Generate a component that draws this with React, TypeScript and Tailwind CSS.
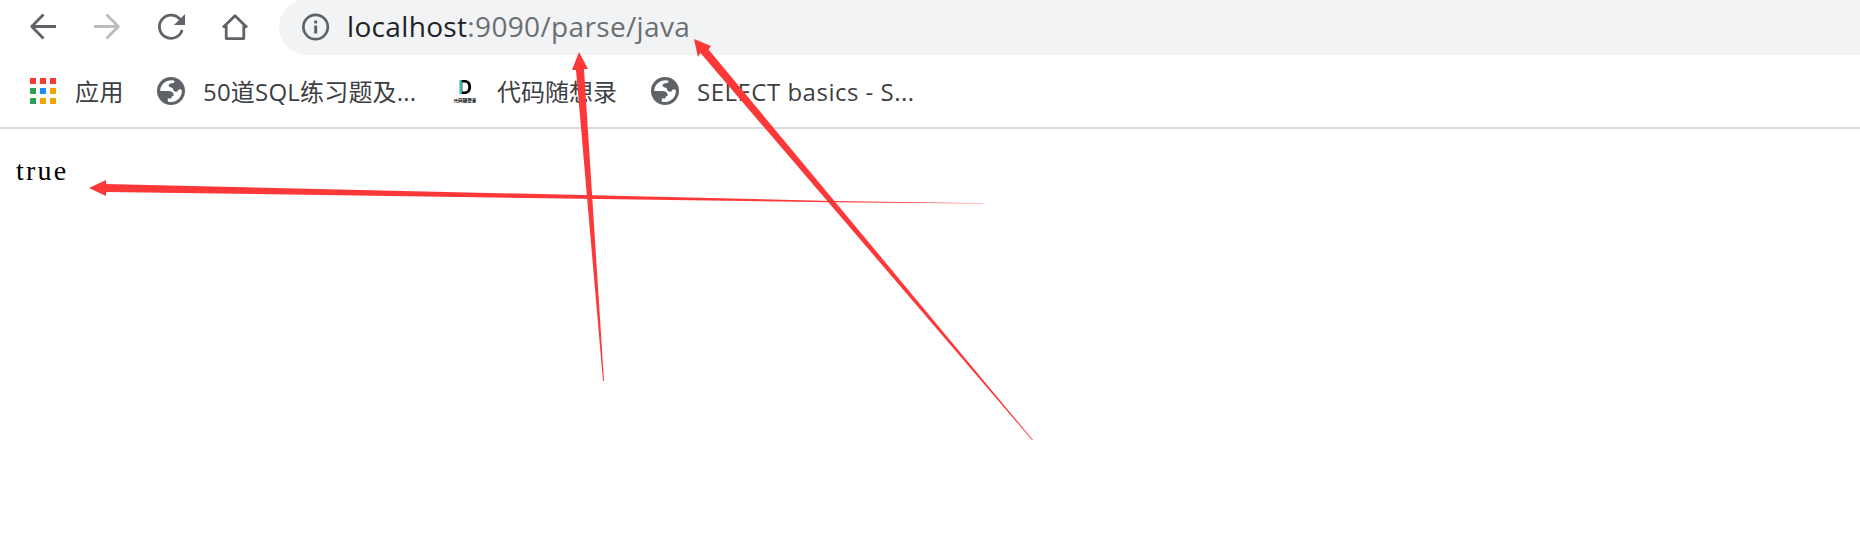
import React from "react";

const SANS = "font-['Open_Sans','Noto_Sans_CJK_SC',sans-serif]";

function Globe() {
  return (
    <svg className="block h-7 w-7 shrink-0" viewBox="0 0 28 28">
      <circle cx="14" cy="14" r="14" fill="#5f6368" />
      <path
        d="M3.2 14 A10.9 10.9 0 0 1 14.5 3.2 L17.5 3.8 L17.2 5.2 Q16.5 6.2 14.6 6.3 Q11.6 6.5 11.6 8.6 Q11.6 10.4 14 10.4 Q16 10.4 16 12.2 Q16.2 14.6 18.6 14.8 Q20.6 15 21.2 13.2 Q22 12 23.6 12.4 L24.8 13 A10.8 10.8 0 0 1 10.8 24.4 L10.8 21.6 L14 21.4 Q14.6 18.8 16.8 18.4 Q16.6 14 11 14 Z"
        fill="#fff"
      />
    </svg>
  );
}

function Apps() {
  const colors = ["#f93a37", "#f93a37", "#f93a37", "#2f9e58", "#1e8cf8", "#f0a500", "#2f9e58", "#f0a500", "#f0a500"];
  return (
    <svg className="block h-[26px] w-[26px] shrink-0" viewBox="0 0 26 26">
      {colors.map((c, i) => (
        <rect key={i} x={(i % 3) * 10} y={Math.floor(i / 3) * 10} width="6" height="6" fill={c} />
      ))}
    </svg>
  );
}

function NavIcon({ kind }: { kind: "back" | "forward" | "reload" | "home" }) {
  return (
    <svg
      className="block h-7 w-[26px] shrink-0 overflow-visible"
      viewBox="0 0 26 28"
      fill="none"
      stroke={kind === "forward" ? "#babcbe" : "#5f6368"}
      strokeWidth="2.8"
      strokeLinejoin={kind === "reload" ? "miter" : "round"}
    >
      {kind === "back" && <path d="M26 13.5H2M13.5 1.5L1.7 13.5L13.5 25.5" />}
      {kind === "forward" && <path d="M0 13.5H24M12.5 1.5L24.3 13.5L12.5 25.5" />}
      {kind === "reload" && (
        <>
          <path d="M22.5 7A11.6 11.6 0 1 0 23.8 18" strokeLinecap="round" />
          <path d="M27 1V12H16Z" fill="#5f6368" stroke="none" />
        </>
      )}
      {kind === "home" && <path d="M1 14.5L13 2.8L25 14.5M4.2 12.5V25.6H21.8V12.5" />}
    </svg>
  );
}

function Arrows() {
  return (
    <svg className="pointer-events-none absolute left-0 top-0 h-[557px] w-[1860px]" viewBox="0 0 1860 557" fill="#fc3838">
      <path d="M89 188L106 180V184L832 200.9L983 203.3V203.6L832 202.2L106 192V196Z" />
      <path d="M579 52L588 69H584L604 381H603L576 70H572Z" />
      <path d="M694 39L711 46L708.5 49.5L1033 440H1032L700.5 53L698 57Z" />
    </svg>
  );
}

export default function App() {
  return (
    <div className={`relative flex h-[557px] w-[1860px] flex-col overflow-hidden bg-white ${SANS}`}>
      <header className="flex h-[129px] shrink-0 flex-col border-b-2 border-[#dadcdc]">
        <div className="flex h-[55px] shrink-0 items-center pl-[30px]">
          <div className="mb-0.5 mr-[31px] flex gap-[38px]">
            <NavIcon kind="back" />
            <NavIcon kind="forward" />
            <NavIcon kind="reload" />
            <NavIcon kind="home" />
          </div>
          <div className="-mt-px flex h-14 flex-1 items-center rounded-l-full bg-[#f1f3f4] pl-[23px] text-[28px] leading-[56px]">
            <svg className="mr-[17px] block h-7 w-7 shrink-0" viewBox="0 0 28 28">
              <circle cx="13.6" cy="14" r="12.2" fill="none" stroke="#5f6368" strokeWidth="2.7" />
              <path d="M12.2 7.4h3v3h-3zM12.2 12.6h3v8h-3z" fill="#5f6368" />
            </svg>
            <span className="mb-0.5 flex tracking-[0.34px]">
              <span className="text-[#202124]">localhost</span>
              <span className="text-[#6b6e72]">:9090/parse/java</span>
            </span>
          </div>
        </div>
        <nav className="flex h-[72px] items-center pl-[30px] text-[24px] leading-[36px] text-[#3c4043]">
          <div className="flex w-[127px] items-center gap-[19px]">
            <Apps />
            <span className="mt-0.5 tracking-[0.5px]">应用</span>
          </div>
          <div className="flex w-[294px] items-center gap-[18px]">
            <Globe />
            <span className="mt-0.5 whitespace-nowrap tracking-[0.2px]">50道SQL练习题及...</span>
          </div>
          <div className="flex w-[200px] items-center gap-[18px]">
            <span className="flex w-7 flex-col items-center leading-none text-black">
              <b className="bg-linear-to-r from-[#38b2ac] from-30% to-black to-30% bg-clip-text font-['Inter',sans-serif] text-[19px] leading-[19px] text-transparent">
                D
              </b>
              <span className="whitespace-nowrap text-[4.5px] font-bold leading-[7px]">代码随想录</span>
            </span>
            <span className="mt-0.5 whitespace-nowrap">代码随想录</span>
          </div>
          <div className="flex items-center gap-[18px]">
            <Globe />
            <span className="mt-0.5 whitespace-nowrap tracking-[0.5px]">SELECT basics - S...</span>
          </div>
        </nav>
      </header>
      <main className="pl-4 pt-[26px]">
        <pre className="font-['Liberation_Serif',serif] text-[28px] leading-[32px] tracking-[2.2px] text-black">true</pre>
      </main>
      <Arrows />
    </div>
  );
}
